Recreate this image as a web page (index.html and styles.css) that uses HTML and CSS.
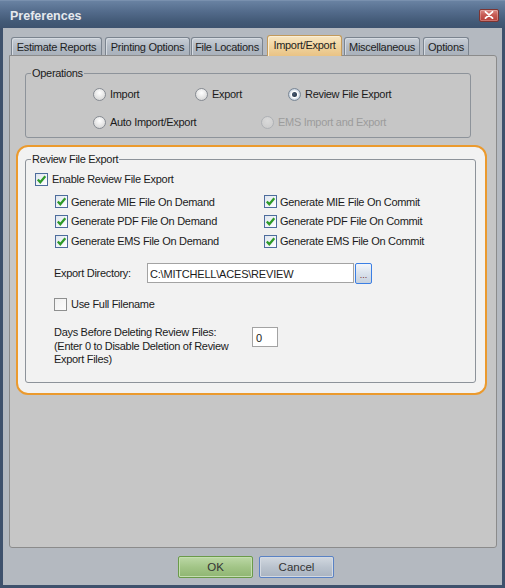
FILE: index.html
```html
<!DOCTYPE html>
<html>
<head>
<meta charset="utf-8">
<title>Preferences</title>
<link rel="stylesheet" href="styles.css">
</head>
<body>
<div class="window">
  <div class="titlebar">
    <span class="title">Preferences</span>
    <span class="close"><svg width="10" height="8" viewBox="0 0 10 8"><path d="M1.5 0.8 L8.5 7.2 M8.5 0.8 L1.5 7.2" stroke="#ffffff" stroke-width="1.8" stroke-linecap="round"/></svg></span>
  </div>
  <div class="client">
    <div class="tabs">
      <div class="tab t1">Estimate Reports</div>
      <div class="tab t2">Printing Options</div>
      <div class="tab t3">File Locations</div>
      <div class="tab t4 sel">Import/Export</div>
      <div class="tab t5">Miscellaneous</div>
      <div class="tab t6">Options</div>
    </div>
    <div class="panel">
      <fieldset class="group ops">
        <legend>Operations</legend>
        <div class="radio-row row1">
          <span class="radio w-import"><span class="rb"></span>Import</span>
          <span class="radio w-export"><span class="rb"></span>Export</span>
          <span class="radio"><span class="rb on"><span class="dot"></span></span>Review File Export</span>
        </div>
        <div class="radio-row row2">
          <span class="radio w-auto"><span class="rb"></span>Auto Import/Export</span>
          <span class="radio disabled"><span class="rb"></span>EMS Import and Export</span>
        </div>
      </fieldset>
      <div class="highlight">
        <fieldset class="group review">
          <legend>Review File Export</legend>
          <div class="cb-row enable">
            <span class="cb on"><svg width="11" height="11" viewBox="0 0 11 11"><path d="M1.8 5.4 L4.3 8.2 L9.3 2.3" fill="none" stroke="#2f9a2a" stroke-width="2.3"/></svg></span>Enable Review File Export
          </div>
          <div class="cb-grid">
            <div class="cb-item"><span class="cb on"><svg width="11" height="11" viewBox="0 0 11 11"><path d="M1.8 5.4 L4.3 8.2 L9.3 2.3" fill="none" stroke="#2f9a2a" stroke-width="2.3"/></svg></span>Generate MIE File On Demand</div>
            <div class="cb-item"><span class="cb on"><svg width="11" height="11" viewBox="0 0 11 11"><path d="M1.8 5.4 L4.3 8.2 L9.3 2.3" fill="none" stroke="#2f9a2a" stroke-width="2.3"/></svg></span>Generate MIE File On Commit</div>
            <div class="cb-item"><span class="cb on"><svg width="11" height="11" viewBox="0 0 11 11"><path d="M1.8 5.4 L4.3 8.2 L9.3 2.3" fill="none" stroke="#2f9a2a" stroke-width="2.3"/></svg></span>Generate PDF File On Demand</div>
            <div class="cb-item"><span class="cb on"><svg width="11" height="11" viewBox="0 0 11 11"><path d="M1.8 5.4 L4.3 8.2 L9.3 2.3" fill="none" stroke="#2f9a2a" stroke-width="2.3"/></svg></span>Generate PDF File On Commit</div>
            <div class="cb-item"><span class="cb on"><svg width="11" height="11" viewBox="0 0 11 11"><path d="M1.8 5.4 L4.3 8.2 L9.3 2.3" fill="none" stroke="#2f9a2a" stroke-width="2.3"/></svg></span>Generate EMS File On Demand</div>
            <div class="cb-item"><span class="cb on"><svg width="11" height="11" viewBox="0 0 11 11"><path d="M1.8 5.4 L4.3 8.2 L9.3 2.3" fill="none" stroke="#2f9a2a" stroke-width="2.3"/></svg></span>Generate EMS File On Commit</div>
          </div>
          <div class="dir-row">
            <span class="dir-label">Export Directory:</span>
            <span class="textbox path">C:\MITCHELL\ACES\REVIEW</span>
            <span class="browse">...</span>
          </div>
          <div class="cb-row full">
            <span class="cb"></span>Use Full Filename
          </div>
          <div class="days-row">
            <span class="days-text">Days Before Deleting Review Files:<br>(Enter 0 to Disable Deletion of Review<br>Export Files)</span>
            <span class="textbox days">0</span>
          </div>
        </fieldset>
      </div>
    </div>
    <div class="buttons">
      <span class="btn ok">OK</span>
      <span class="btn cancel">Cancel</span>
    </div>
  </div>
</div>
</body>
</html>
```

FILE: styles.css
```css
* { box-sizing: border-box; }
html, body { margin: 0; padding: 0; }
body {
  width: 505px;
  height: 588px;
  overflow: hidden;
  font-family: "Liberation Sans", Arial, sans-serif;
  font-size: 11px;
  letter-spacing: -0.3px;
  color: #1b1b1b;
  background: #3f5270;
}
.window {
  width: 505px;
  height: 588px;
  display: flex;
  flex-direction: column;
  background: #3e516c;
}
.titlebar {
  height: 28px;
  flex: none;
  display: flex;
  align-items: center;
  justify-content: space-between;
  padding: 2px 6px 0 10px;
  background: linear-gradient(#6982a2, #536b8b 40%, #435a77 75%, #3e536f);
  border-top: 1px solid #7990ae;
}
.title {
  font-size: 12.5px;
  font-weight: bold;
  letter-spacing: 0;
  color: #e6e9ee;
}
.close {
  width: 20px;
  height: 13px;
  margin-top: -1px;
  border: 1px solid #7c3432;
  border-radius: 2px;
  background: linear-gradient(#dc8a85, #c75a54 45%, #b6403b);
  display: flex;
  align-items: center;
  justify-content: center;
  box-shadow: inset 0 0 0 1px rgba(255,255,255,0.25);
}
.client {
  flex: 1;
  margin: 0 3px 3px;
  background: #b4b9c0;
  display: flex;
  flex-direction: column;
}
.tabs {
  height: 27px;
  flex: none;
  display: flex;
  align-items: flex-end;
  padding-left: 8px;
}
.tab {
  height: 18px;
  border: 1px solid #7b848f;
  border-bottom: none;
  border-radius: 3px 3px 0 0;
  background: linear-gradient(#c9cfd7, #b3bbc5 50%, #a9b1bb);
  box-shadow: inset 1px 1px 0 #d6dbe1;
  display: flex;
  align-items: center;
  justify-content: center;
  padding-top: 1px;
  color: #1e1e1e;
  white-space: nowrap;
}
.t1 { width: 91px; }
.t2 { width: 85px; margin-left: 3px; }
.t3 { width: 72px; margin-left: 1px; }
.t4 { width: 75px; margin-left: 4px; }
.t5 { width: 76px; margin-left: 2px; }
.t6 { width: 46px; margin-left: 3px; }
.tab.sel {
  height: 21px;
  margin-bottom: -1px;
  position: relative;
  z-index: 1;
  padding-top: 0;
  padding-bottom: 2px;
  border-color: #c39a5b;
  background: linear-gradient(#f8e6c2, #f0d49f 50%, #e9c385);
  box-shadow: inset 1px 1px 0 #fbefd6;
}
.panel {
  flex: 1;
  margin: 0 5px 0 6px;
  border: 1px solid #8b8b8b;
  border-radius: 0 3px 3px 3px;
  background: #c6c6c6;
  display: flex;
  flex-direction: column;
  align-items: stretch;
}
.group {
  border: 1px solid #8d939a;
  border-radius: 3px;
  padding: 0;
  margin: 0;
  min-width: 0;
}
.group legend {
  padding: 0 1px;
  margin-left: 5px;
  line-height: 13px;
}
.ops {
  margin: 11px 25px 0 15px;
  padding-bottom: 7px;
}
.radio-row {
  display: flex;
  align-items: center;
  height: 16px;
  padding-left: 67px;
}
.row1 { margin-top: 6px; }
.row2 { margin-top: 12px; }
.radio {
  display: flex;
  align-items: center;
  gap: 4px;
  white-space: nowrap;
}
.w-import { width: 102px; }
.w-export { width: 93px; }
.w-auto { width: 168px; }
.rb {
  width: 13px;
  height: 13px;
  flex: none;
  border-radius: 50%;
  border: 1px solid #868b92;
  background: radial-gradient(circle at 50% 35%, #ffffff, #e2e2e2 60%, #cfcfcf);
  display: flex;
  align-items: center;
  justify-content: center;
}
.rb.on {
  border-color: #7b8896;
  background: radial-gradient(circle, #ffffff 40%, #b9c7d8 75%, #dfe4ea);
}
.dot {
  width: 5px;
  height: 5px;
  border-radius: 50%;
  background: radial-gradient(circle at 40% 40%, #4a5c74, #1c2a3c);
}
.radio.disabled { color: #9c9c9c; }
.radio.disabled .rb {
  border-color: #aeb1b5;
  background: radial-gradient(circle at 50% 35%, #dadada, #c9c9c9);
}
.highlight {
  margin: 7px 9px 0 6px;
  border: 2px solid #eb9a2e;
  border-radius: 12px;
  background: #f2f2f2;
  padding: 6px 9px 10px 7px;
}
.review { padding-bottom: 15px; }
.cb-row {
  display: flex;
  align-items: center;
  height: 16px;
  gap: 4px;
  white-space: nowrap;
}
.enable { margin-top: 5px; padding-left: 9px; }
.cb {
  width: 13px;
  height: 13px;
  flex: none;
  border: 1px solid #8e8f8f;
  background: linear-gradient(135deg, #f0f0f0, #fcfcfc);
  display: flex;
  align-items: center;
  justify-content: center;
}
.cb.on {
  border-color: #4d6c9c;
  background: linear-gradient(135deg, #dfe6ef, #ffffff);
}
.cb-grid {
  margin-top: 5px;
  padding-left: 29px;
  display: grid;
  grid-template-columns: 209px auto;
  grid-template-rows: 19px 20px 20px;
}
.cb-item {
  display: flex;
  align-items: center;
  gap: 3px;
  white-space: nowrap;
}
.dir-row {
  margin-top: 12px;
  padding-left: 28px;
  display: flex;
  align-items: center;
  height: 20px;
}
.dir-label { width: 93px; }
.textbox {
  height: 20px;
  border: 1px solid #a3a3a3;
  background: #ffffff;
  display: flex;
  align-items: center;
  padding-left: 2px;
  padding-top: 1px;
}
.path { width: 207px; letter-spacing: -0.2px; }
.browse {
  width: 17px;
  height: 21px;
  margin-left: 1px;
  margin-top: 1px;
  border: 1px solid #3b7fe4;
  border-radius: 2px;
  background: linear-gradient(#f3f6fb, #dae2ec 50%, #c7d1de);
  color: #7a2a2a;
  font-size: 9px;
  letter-spacing: 0;
  display: flex;
  align-items: flex-end;
  justify-content: center;
  padding-bottom: 4px;
  line-height: 8px;
}
.full { margin-top: 13px; padding-left: 28px; }
.days-row {
  margin-top: 15px;
  padding-left: 28px;
  display: flex;
  align-items: flex-start;
}
.days-text {
  width: 198px;
  line-height: 13.5px;
  margin-top: -1px;
  white-space: nowrap;
}
.days { width: 26px; padding-left: 3px; }
.buttons {
  height: 37px;
  flex: none;
  display: flex;
  gap: 6px;
  padding: 8px 0 0 175px;
}
.btn {
  width: 75px;
  height: 22px;
  border-radius: 2px;
  display: flex;
  align-items: center;
  justify-content: center;
  font-size: 11.5px;
  letter-spacing: 0;
  color: #343434;
}
.ok {
  border: 1px solid #6a9a4a;
  background: linear-gradient(#bcd8a6, #a2c587 50%, #8fb572);
  box-shadow: inset 0 0 0 1px #c4deb0;
}
.cancel {
  border: 1px solid #5a82c4;
  background: linear-gradient(#d2d8e0, #bac3ce 50%, #a9b3c0);
  box-shadow: inset 0 0 0 1px #d4dae2;
}
```
